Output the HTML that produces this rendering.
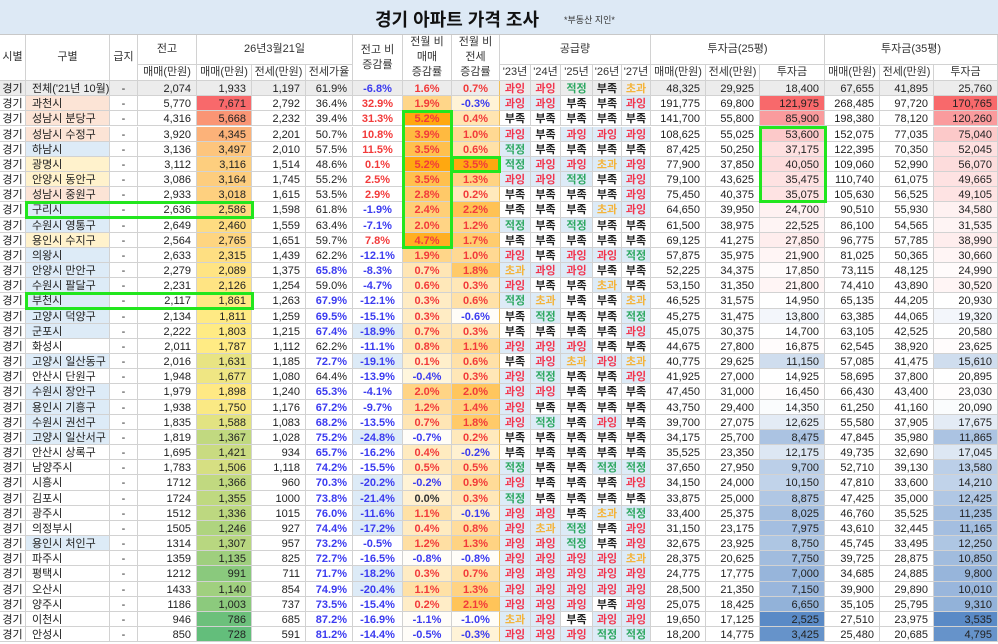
<!DOCTYPE html>
<html><head><meta charset="utf-8">
<style>
html,body{margin:0;padding:0;background:#fff;}
body{width:998px;height:644px;position:relative;overflow:hidden;font-family:"Liberation Sans","Noto Sans CJK KR","NanumGothic",sans-serif;font-size:11px;color:#222;}
#title{position:absolute;left:0;top:0;width:998px;height:35px;background:#dde9f5;border-bottom:1px solid #c8c8c8;box-sizing:border-box;}
#title .t{position:absolute;left:375px;top:6px;font-size:18px;font-weight:bold;color:#111;white-space:nowrap;}
#title .s{position:absolute;left:564px;top:13px;font-size:9px;color:#333;white-space:nowrap;}
.c{position:absolute;box-sizing:border-box;border-right:1px solid #d2d2d2;border-bottom:1px solid #d2d2d2;white-space:nowrap;overflow:hidden;line-height:14px;padding-top:1px;}
.h{display:flex;align-items:center;justify-content:center;text-align:center;line-height:15px;color:#333;background:#fff;padding-top:0;}
.r{text-align:right;padding-right:5px;}
.l{text-align:left;padding-left:6px;}
.m{text-align:center;}
.b{font-weight:bold;}
.box{position:absolute;border:3px solid #22e61e;box-sizing:border-box;}
</style></head><body>
<div id="title"><span class="t">경기 아파트 가격 조사</span><span class="s">*부동산 지인*</span></div>
<div id="g"></div>
<script>
var X=[0,26,110,138,197,252,306,353,403,452,500,531,561,593,622,651,706,760,825,880,934,998];
var D=[
["전체('21년 10월)","g","2,074","1,933","1,197","61.9%","-6.8%","1.6%","0.7%","과잉 과잉 적정 부족 초과","48,325","29,925","18,400","67,655","41,895","25,760"],
["과천시","p","5,770","7,671","2,792","36.4%","32.9%","1.9%","-0.3%","과잉 과잉 부족 부족 과잉","191,775","69,800","121,975","268,485","97,720","170,765"],
["성남시 분당구","p","4,316","5,668","2,232","39.4%","31.3%","5.2%","0.4%","부족 부족 부족 부족 부족","141,700","55,800","85,900","198,380","78,120","120,260"],
["성남시 수정구","p","3,920","4,345","2,201","50.7%","10.8%","3.9%","1.0%","과잉 부족 과잉 과잉 과잉","108,625","55,025","53,600","152,075","77,035","75,040"],
["하남시","b","3,136","3,497","2,010","57.5%","11.5%","3.5%","0.6%","적정 부족 부족 부족 부족","87,425","50,250","37,175","122,395","70,350","52,045"],
["광명시","y","3,112","3,116","1,514","48.6%","0.1%","5.2%","3.5%","적정 과잉 과잉 초과 과잉","77,900","37,850","40,050","109,060","52,990","56,070"],
["안양시 동안구","y","3,086","3,164","1,745","55.2%","2.5%","3.5%","1.3%","과잉 과잉 적정 부족 과잉","79,100","43,625","35,475","110,740","61,075","49,665"],
["성남시 중원구","p","2,933","3,018","1,615","53.5%","2.9%","2.8%","0.2%","부족 부족 부족 부족 과잉","75,450","40,375","35,075","105,630","56,525","49,105"],
["구리시","b","2,636","2,586","1,598","61.8%","-1.9%","2.4%","2.2%","부족 부족 부족 초과 과잉","64,650","39,950","24,700","90,510","55,930","34,580"],
["수원시 영통구","b","2,649","2,460","1,559","63.4%","-7.1%","2.0%","1.2%","적정 부족 적정 부족 부족","61,500","38,975","22,525","86,100","54,565","31,535"],
["용인시 수지구","y","2,564","2,765","1,651","59.7%","7.8%","4.7%","1.7%","부족 부족 부족 부족 부족","69,125","41,275","27,850","96,775","57,785","38,990"],
["의왕시","b","2,633","2,315","1,439","62.2%","-12.1%","1.9%","1.0%","과잉 부족 과잉 과잉 적정","57,875","35,975","21,900","81,025","50,365","30,660"],
["안양시 만안구","b","2,279","2,089","1,375","65.8%","-8.3%","0.7%","1.8%","초과 과잉 과잉 부족 부족","52,225","34,375","17,850","73,115","48,125","24,990"],
["수원시 팔달구","b","2,231","2,126","1,254","59.0%","-4.7%","0.6%","0.3%","과잉 부족 부족 초과 부족","53,150","31,350","21,800","74,410","43,890","30,520"],
["부천시","b","2,117","1,861","1,263","67.9%","-12.1%","0.3%","0.6%","적정 초과 부족 부족 초과","46,525","31,575","14,950","65,135","44,205","20,930"],
["고양시 덕양구","b","2,134","1,811","1,259","69.5%","-15.1%","0.3%","-0.6%","부족 적정 부족 부족 적정","45,275","31,475","13,800","63,385","44,065","19,320"],
["군포시","b","2,222","1,803","1,215","67.4%","-18.9%","0.7%","0.3%","부족 부족 부족 부족 과잉","45,075","30,375","14,700","63,105","42,525","20,580"],
["화성시","w","2,011","1,787","1,112","62.2%","-11.1%","0.8%","1.1%","과잉 과잉 과잉 부족 부족","44,675","27,800","16,875","62,545","38,920","23,625"],
["고양시 일산동구","b","2,016","1,631","1,185","72.7%","-19.1%","0.1%","0.6%","부족 과잉 초과 과잉 초과","40,775","29,625","11,150","57,085","41,475","15,610"],
["안산시 단원구","w","1,948","1,677","1,080","64.4%","-13.9%","-0.4%","0.3%","과잉 적정 부족 부족 과잉","41,925","27,000","14,925","58,695","37,800","20,895"],
["수원시 장안구","b","1,979","1,898","1,240","65.3%","-4.1%","2.0%","2.0%","과잉 과잉 부족 부족 부족","47,450","31,000","16,450","66,430","43,400","23,030"],
["용인시 기흥구","b","1,938","1,750","1,176","67.2%","-9.7%","1.2%","1.4%","과잉 부족 부족 부족 부족","43,750","29,400","14,350","61,250","41,160","20,090"],
["수원시 권선구","b","1,835","1,588","1,083","68.2%","-13.5%","0.7%","1.8%","과잉 적정 부족 과잉 부족","39,700","27,075","12,625","55,580","37,905","17,675"],
["고양시 일산서구","b","1,819","1,367","1,028","75.2%","-24.8%","-0.7%","0.2%","부족 부족 부족 부족 부족","34,175","25,700","8,475","47,845","35,980","11,865"],
["안산시 상록구","w","1,695","1,421","934","65.7%","-16.2%","0.4%","-0.2%","부족 부족 부족 부족 부족","35,525","23,350","12,175","49,735","32,690","17,045"],
["남양주시","w","1,783","1,506","1,118","74.2%","-15.5%","0.5%","0.5%","적정 부족 부족 적정 적정","37,650","27,950","9,700","52,710","39,130","13,580"],
["시흥시","w","1712","1,366","960","70.3%","-20.2%","-0.2%","0.9%","과잉 부족 부족 부족 과잉","34,150","24,000","10,150","47,810","33,600","14,210"],
["김포시","w","1724","1,355","1000","73.8%","-21.4%","0.0%","0.3%","적정 부족 부족 부족 부족","33,875","25,000","8,875","47,425","35,000","12,425"],
["광주시","w","1512","1,336","1015","76.0%","-11.6%","1.1%","-0.1%","과잉 과잉 부족 초과 적정","33,400","25,375","8,025","46,760","35,525","11,235"],
["의정부시","w","1505","1,246","927","74.4%","-17.2%","0.4%","0.8%","과잉 초과 적정 부족 과잉","31,150","23,175","7,975","43,610","32,445","11,165"],
["용인시 처인구","b","1314","1,307","957","73.2%","-0.5%","1.2%","1.3%","과잉 과잉 적정 부족 과잉","32,675","23,925","8,750","45,745","33,495","12,250"],
["파주시","w","1359","1,135","825","72.7%","-16.5%","-0.8%","-0.8%","과잉 과잉 과잉 과잉 초과","28,375","20,625","7,750","39,725","28,875","10,850"],
["평택시","w","1212","991","711","71.7%","-18.2%","0.3%","0.7%","과잉 과잉 과잉 과잉 과잉","24,775","17,775","7,000","34,685","24,885","9,800"],
["오산시","w","1433","1,140","854","74.9%","-20.4%","1.1%","1.3%","과잉 과잉 과잉 과잉 과잉","28,500","21,350","7,150","39,900","29,890","10,010"],
["양주시","w","1186","1,003","737","73.5%","-15.4%","0.2%","2.1%","과잉 과잉 과잉 부족 과잉","25,075","18,425","6,650","35,105","25,795","9,310"],
["이천시","w","946","786","685","87.2%","-16.9%","-1.1%","-1.0%","초과 과잉 부족 과잉 과잉","19,650","17,125","2,525","27,510","23,975","3,535"],
["안성시","w","850","728","591","81.2%","-14.4%","-0.5%","-0.3%","과잉 과잉 과잉 적정 적정","18,200","14,775","3,425","25,480","20,685","4,795"]
];
var blueJG={"군포시":1,"고양시 일산동구":1,"고양시 일산서구":1,"시흥시":1,"김포시":1,"광주시":1,"의정부시":1,"평택시":1,"오산시":1};
var NB={g:"#ececec",p:"#fce4d6",y:"#fff2cc",b:"#ddebf7",w:"#fff"};
var g=document.getElementById('g'),H="";
function cell(c0,c1,top,h,cls,txt,st){H+='<div class="c '+cls+'" style="left:'+X[c0]+'px;top:'+top+'px;width:'+(X[c1]-X[c0])+'px;height:'+h+'px;'+(st||'')+'">'+txt+'</div>';}
var T1=35,T2=65,T3=81;
cell(0,1,T1,T3-T1,'h','시별');cell(1,2,T1,T3-T1,'h','구별');cell(2,3,T1,T3-T1,'h','급지');
cell(3,4,T1,T2-T1,'h','전고');cell(3,4,T2,T3-T2,'h','매매(만원)');
cell(4,7,T1,T2-T1,'h','26년3월21일');cell(4,5,T2,T3-T2,'h','매매(만원)');cell(5,6,T2,T3-T2,'h','전세(만원)');cell(6,7,T2,T3-T2,'h','전세가율');
cell(7,8,T1,T3-T1,'h','전고 비<br>증감률');cell(8,9,T1,T3-T1,'h','전월 비<br>매매<br>증감률');cell(9,10,T1,T3-T1,'h','전월 비<br>전세<br>증감률');
cell(10,15,T1,T2-T1,'h','공급량');
["'23년","'24년","'25년","'26년","'27년"].forEach(function(t,i){cell(10+i,11+i,T2,T3-T2,'h',t);});
cell(15,18,T1,T2-T1,'h','투자금(25평)');cell(18,21,T1,T2-T1,'h','투자금(35평)');
["매매(만원)","전세(만원)","투자금","매매(만원)","전세(만원)","투자금"].forEach(function(t,i){cell(15+i,16+i,T2,T3-T2,'h',t);});
function num(s){return parseFloat(s.replace(/,/g,'').replace('%',''));}
function mix(a,b,t){return 'rgb('+[0,1,2].map(function(i){return Math.round(a[i]+(b[i]-a[i])*t)}).join(',')+')';}
function med(a){a=a.slice().sort(function(x,y){return x-y});return a[Math.floor(a.length/2)];}
function scale3(v,mn,md,mx,lo,mi,hi){if(v<=md)return mix(lo,mi,(v-mn)/(md-mn||1));return mix(mi,hi,(v-md)/(mx-md||1));}
var col=function(k){return D.map(function(r){return num(r[k])});};
var mm=col(3),i25=col(12),i35=col(15),pm=col(7),pj=col(8);
var GR=[99,190,123],YE=[255,235,132],RE=[248,105,107],WH=[255,255,255],BL=[90,138,198];
var RH=15.17;
var SC={"과잉":"#f2364f","적정":"#2ea862","초과":"#f4b43c","부족":"#222"};
D.forEach(function(r,i){
 var top=(T3+i*RH).toFixed(2),h=RH.toFixed(2),gr=r[1]=='g';
 var base=gr?'background:#ececec;':'';
 cell(0,1,top,h,'m','경기',base);
 cell(1,2,top,h,'l',r[0],'background:'+NB[r[1]]);
 cell(2,3,top,h,'m','-',base);
 cell(3,4,top,h,'r',r[2],base);
 cell(4,5,top,h,'r',r[3],gr?base:'background:'+scale3(mm[i],Math.min.apply(0,mm),med(mm),Math.max.apply(0,mm),GR,YE,RE));
 cell(5,6,top,h,'r',r[4],base);
 var ga=num(r[5]);cell(6,7,top,h,'r'+(ga>=65?' b':''),r[5],base+(ga>=65?'color:#3b3bf0;':''));
 var jg=num(r[6]);cell(7,8,top,h,'m b',r[6],base+'color:'+(jg>=0?'#f23a3a':'#3b3bf0')+';'+(blueJG[r[0]]?'background:#ddebf7;':''));
 [7,8].forEach(function(k,j){var v=num(r[k]);var arr=j?pj:pm;var mx=Math.max.apply(0,arr);
  var bg=gr?'#ececec':(v<=-0.5?'#fffdf8':mix([255,247,225],[255,168,16],Math.max(0,(v+0.5)/(mx+0.5))));
  cell(8+j,9+j,top,h,'m b',r[k],'background:'+bg+';color:'+(v>0?'#f23a3a':(v<0?'#3b3bf0':'#333'))+';'+(j==1?'border-right:1px solid #f1c15a;':''));});
 r[9].split(' ').forEach(function(s,j){var bg=gr?'#ececec':(s=='부족'?'#fff':'#ddebf7');cell(10+j,11+j,top,h,'m b',s,'background:'+bg+';color:'+SC[s]+';');});
 cell(15,16,top,h,'r',r[10],base);cell(16,17,top,h,'r',r[11],base);
 cell(17,18,top,h,'r',r[12],gr?base:'background:'+scale3(i25[i],Math.min.apply(0,i25),med(i25),Math.max.apply(0,i25),BL,WH,RE));
 cell(18,19,top,h,'r',r[13],base);cell(19,20,top,h,'r',r[14],base);
 cell(20,21,top,h,'r',r[15],gr?base:'background:'+scale3(i35[i],Math.min.apply(0,i35),med(i35),Math.max.apply(0,i35),BL,WH,RE));
});
function box(x0,x1,r0,r1){var t=T3+r0*RH-1,b=T3+(r1+1)*RH+1;H+='<div class="box" style="left:'+x0+'px;top:'+t.toFixed(1)+'px;width:'+(x1-x0)+'px;height:'+(b-t).toFixed(1)+'px"></div>';}
box(25,254,8,8);box(25,254,14,14);box(402,453,2,10);box(451,501,5,5);box(759,827,3,7);
g.innerHTML=H;
</script>
</body></html>
